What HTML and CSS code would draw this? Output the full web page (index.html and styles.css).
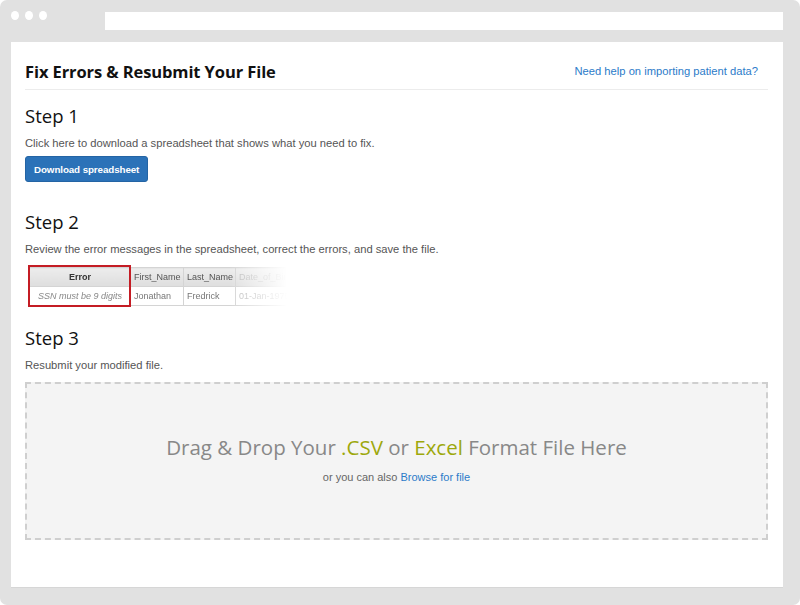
FILE: index.html
```html
<!DOCTYPE html>
<html>
<head>
<meta charset="utf-8">
<link rel="stylesheet" href="styles.css">
</head>
<body>
<div class="frame">
  <div class="toolbar">
    <div class="dots"><span class="dot"></span><span class="dot"></span><span class="dot"></span></div>
    <div class="address"></div>
  </div>
  <div class="page">
    <div class="header">
      <h1 class="title">Fix Errors &amp; Resubmit Your File</h1>
      <a class="help" href="#">Need help on importing patient data?</a>
    </div>
    <section class="step step-1">
      <h2 class="step-title">Step 1</h2>
      <p class="step-text">Click here to download a spreadsheet that shows what you need to fix.</p>
      <button class="btn">Download spreadsheet</button>
    </section>
    <section class="step step-2">
      <h2 class="step-title">Step 2</h2>
      <p class="step-text">Review the error messages in the spreadsheet, correct the errors, and save the file.</p>
      <div class="sheet-wrap">
        <table class="sheet">
          <colgroup><col class="w-err"><col class="w-first"><col class="w-last"><col class="w-date"></colgroup>
          <tr><th class="err-col">Error</th><th>First_Name</th><th>Last_Name</th><th class="faded">Date_of_Birth</th></tr>
          <tr><td class="err-col err-msg">SSN must be 9 digits</td><td>Jonathan</td><td>Fredrick</td><td class="faded">01-Jan-1975</td></tr>
        </table>
        <div class="err-box"></div>
      </div>
    </section>
    <section class="step step-3">
      <h2 class="step-title">Step 3</h2>
      <p class="step-text">Resubmit your modified file.</p>
      <div class="dropzone">
        <div class="drop-main">Drag &amp; Drop Your <span class="hl">.CSV</span> or <span class="hl">Excel</span> Format File Here</div>
        <div class="drop-sub">or you can also <a href="#">Browse for file</a></div>
      </div>
    </section>
  </div>
</div>
</body>
</html>
```
FILE: styles.css
```css
html, body { margin: 0; padding: 0; background: #ffffff; }
body { width: 800px; height: 605px; overflow: hidden; font-family: "Liberation Sans", Arial, sans-serif; }
.frame {
  width: 800px; height: 605px; background: #e1e1e1; border-radius: 7px;
  display: flex; flex-direction: column; box-sizing: border-box;
}
.toolbar { display: flex; align-items: flex-start; height: 42px; padding: 11px 17px 0 11px; box-sizing: border-box; }
.dots { display: flex; gap: 6px; width: 94px; }
.dot { width: 8px; height: 9px; border-radius: 50%; background: #fff; }
.address { flex: 1; height: 18px; margin-top: 1px; background: #fff; }
.page {
  margin: 0 17px 0 11px; height: 545px; background: #fff;
  padding: 0 15px 0 14px; box-sizing: border-box;
  box-shadow: 0 1px 0 #d6d6d6;
}
.header {
  display: flex; justify-content: space-between; align-items: flex-end;
  padding-top: 19px; padding-bottom: 6px; border-bottom: 1px solid #ececec;
}
.title { margin: 0; font-family: "Open Sans", sans-serif; font-weight: 700; font-size: 16.5px; color: #111; line-height: 22px; letter-spacing: -0.1px; }
.help { font-size: 11.2px; color: #2b7bc9; text-decoration: none; margin-right: 10px; line-height: 16px; padding-bottom: 4px; }
.step-title { margin: 0; font-family: "Open Sans", sans-serif; font-weight: 400; font-size: 18.5px; line-height: 26px; color: #111; }
.step-text { margin: 7px 0 0; font-size: 11.2px; line-height: 14px; color: #555; }
.step-1 .step-title { margin-top: 13px; }
.btn {
  margin-top: 6px; height: 26px; padding: 0 8px; border: 1px solid #2464a4; border-radius: 3px;
  background: #2b72b8; color: #fff; font-family: "Liberation Sans", Arial, sans-serif;
  font-weight: 700; font-size: 9.8px; letter-spacing: -0.1px; display: block;
}
.step-2 .step-title { margin-top: 27px; }
.sheet-wrap { position: relative; margin: 11px 0 0 4px; width: 262px; }
.sheet { border-collapse: collapse; font-size: 9px; color: #666; table-layout: fixed; width: 276px;
  -webkit-mask-image: linear-gradient(to right, #000 0, #000 200px, transparent 258px);
  mask-image: linear-gradient(to right, #000 0, #000 200px, transparent 258px); }
.w-err { width: 101px; }
.w-first { width: 53px; }
.w-last { width: 52px; }
.w-date { width: 70px; }
.sheet th, .sheet td { border: 1px solid #d4d4d4; height: 19px; padding: 0 3px; text-align: left; white-space: nowrap; box-sizing: border-box; }
.sheet th { background: linear-gradient(#ececec, #dedede); font-weight: 400; color: #555; }
.sheet td { color: #777; }
.sheet .err-col { text-align: center; }
.sheet th.err-col { color: #333; font-weight: 700; }
.sheet .err-msg { font-style: italic; color: #888; }
.sheet .faded { color: #bbb; }
.err-box { position: absolute; left: -1px; top: -2px; width: 103px; height: 42px; border: 2px solid #c41c24; box-sizing: border-box; }
.step-3 .step-title { margin-top: 19px; }
.dropzone {
  margin-top: 10px; height: 158px; background: #f4f4f4; border: 2px dashed #cfcfcf; box-sizing: border-box;
  display: flex; flex-direction: column; align-items: center; padding-top: 49px;
}
.drop-main { font-family: "Open Sans", sans-serif; font-size: 20.5px; color: #888; line-height: 28px; }
.hl { color: #9da80c; }
.drop-sub { margin-top: 10px; font-size: 11px; color: #666; }
.drop-sub a { color: #2b7bc9; text-decoration: none; }
```
